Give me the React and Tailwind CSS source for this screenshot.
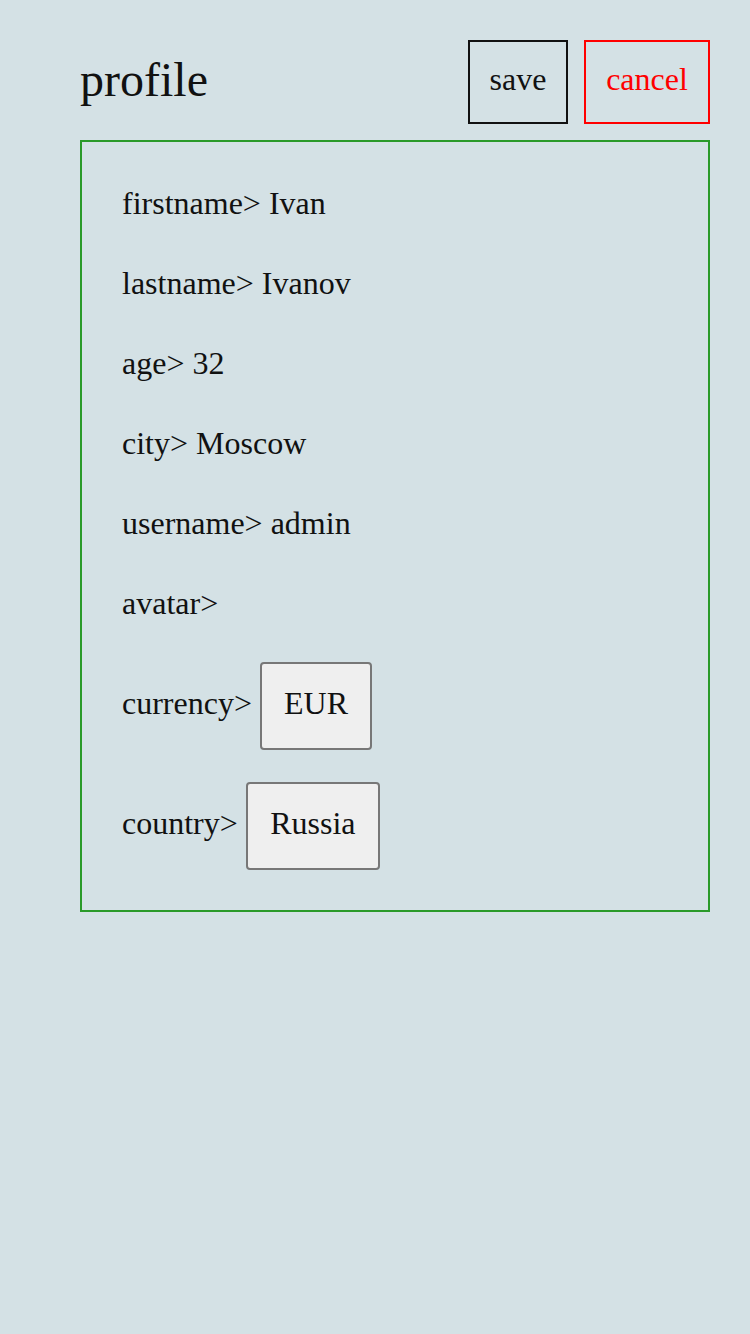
export default function App() {
  const rows = [
    ["firstname", "Ivan"],
    ["lastname", "Ivanov"],
    ["age", "32"],
    ["city", "Moscow"],
    ["username", "admin"],
    ["avatar", ""],
  ];

  return (
    <div
      className="min-h-[1334px] w-[750px] bg-[#d4e1e5] text-[#111111] pl-20 pr-10 pt-10"
      style={{ fontFamily: "'Liberation Serif', 'Times New Roman', serif" }}
    >
      <div className="flex items-center justify-between">
        <h1 className="mb-1 text-[48px] leading-[56px]">profile</h1>
        <div className="flex gap-4">
          <button className="w-[100px] border-2 border-[#111111] pt-[17px] pb-[23px] text-center text-[32px] leading-10">
            save
          </button>
          <button className="w-[126px] border-2 border-[#ff0000] pt-[17px] pb-[23px] text-center text-[32px] leading-10 text-[#ff0000]">
            cancel
          </button>
        </div>
      </div>

      <div className="mt-4 border-2 border-[#2a9a2a] px-10 pt-[41px] pb-10 text-[32px] leading-10">
        <div className="flex flex-col gap-10">
          {rows.map(([k, v]) => (
            <div key={k}>
              {k}&gt;{v ? " " + v : ""}
            </div>
          ))}
        </div>
        <div className="mt-[39px] flex items-center gap-2">
          <span className="mb-[6px]">currency&gt;</span>
          <button className="w-[112px] rounded border-2 border-[#777777] bg-[#efefef] pt-[19px] pb-[25px] text-center text-[32px] leading-10">
            EUR
          </button>
        </div>
        <div className="mt-8 flex items-center gap-2">
          <span className="mb-[6px]">country&gt;</span>
          <button className="w-[134px] rounded border-2 border-[#777777] bg-[#efefef] pt-[19px] pb-[25px] text-center text-[32px] leading-10">
            Russia
          </button>
        </div>
      </div>
    </div>
  );
}
